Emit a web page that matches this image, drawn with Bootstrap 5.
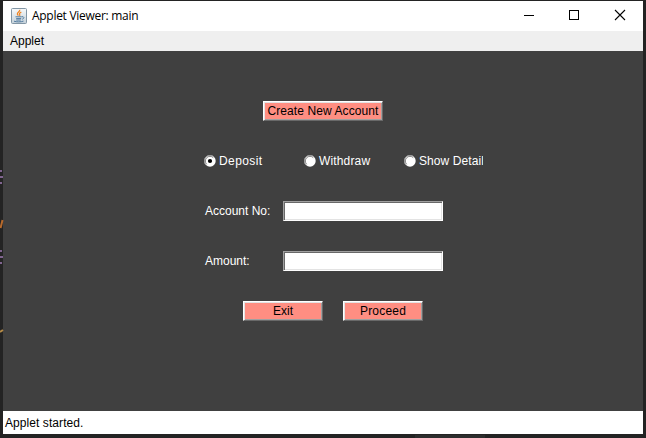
<!DOCTYPE html>
<html lang="en">
<head>
<meta charset="utf-8">
<title>Applet Viewer: main</title>
<link href="https://cdn.jsdelivr.net/npm/bootstrap@5.3.0/dist/css/bootstrap.min.css" rel="stylesheet">
<style>
html, body { height: 438px; overflow: hidden; }
body { background: #232323; font: 12px/20px "Liberation Sans", Arial, sans-serif; color: #000; padding: 1px 3px 4px; }
.desktop-edge { left: 0; top: 0; pointer-events: none; }
.applet-window { width: 640px; height: 433px; }
.title-bar { height: 30px; background: #fff; font: 12px/30px "Open Sans", "Noto Sans", sans-serif; padding-left: 8px; }
.title-text { margin-left: 5px; letter-spacing: -.29px; }
.menu-strip { height: 20px; background: #efefef; padding-left: 7px; }
.applet-body { background: #404040; height: 360px; padding: 50px 0 0 200px; }
.applet-form { width: 280px; gap: 30px; }
.form-line { height: 20px; }
.awt-btn { height: 20px; padding: 0; border: 1px solid; border-color: #fff #696969 #696969 #fff; border-radius: 0; background: #ff8e82; box-shadow: inset 1px 1px #e3e3e3, inset -1px -1px #a0a0a0; font: 12px/18px "Liberation Sans", Arial, sans-serif; color: #000; white-space: nowrap; }
.awt-wide { width: 120px; margin-left: 60px; letter-spacing: .09px; }
.awt-mid { width: 80px; }
.action-line { gap: 20px; padding-left: 40px; }
.awt-field { width: 160px; height: 20px; border: 1px solid; border-color: #a0a0a0 #fff #fff #a0a0a0; border-radius: 0; background: #fff; box-shadow: inset 1px 1px #696969, inset -1px -1px #e3e3e3; padding: 0 4px; outline: 0; font-size: 12px; }
.field-name { width: 80px; padding-left: 2px; color: #fff; }
.radio-option { width: 100px; color: #fff; white-space: nowrap; padding-left: 1px; gap: 3px; }
.radio-option svg { margin-top: -1px; }
.radio-last { width: 80px; overflow: hidden; letter-spacing: .08px; }
.t-deposit { letter-spacing: .42px; }
.t-withdraw { letter-spacing: .15px; }
.t-proceed { letter-spacing: .2px; }
.status-strip { height: 23px; background: #fff; line-height: 24px; padding-left: 2px; letter-spacing: .07px; }
svg { display: block; flex: none; }
</style>
<script src="https://cdn.jsdelivr.net/npm/bootstrap@5.3.0/dist/js/bootstrap.bundle.min.js"></script>
</head>
<body>
<svg class="desktop-edge position-absolute" width="646" height="438" aria-hidden="true">
  <path d="M0 171h2M0 177h3M0 183h2M0 251h2M0 257h3M0 263h2" stroke="#80658f" stroke-width="2"/>
  <path d="M.5 228L2.5 220" stroke="#b86a2c" stroke-width="2"/>
  <path d="M0 332L3 330" stroke="#b58b47" stroke-width="2"/>
  <path d="M415 435h70v3h-70z" fill="#2d2d2d"/>
</svg>
<main class="applet-window d-flex flex-column">
  <header class="title-bar d-flex align-items-center">
    <svg width="16" height="16" viewBox="0 0 16 16">
      <defs><linearGradient id="tile" x2="0" y2="1"><stop stop-color="#f8fafb"/><stop offset="1" stop-color="#c3d0d9"/></linearGradient></defs>
      <rect x=".5" y=".5" width="15" height="15" rx="1" fill="url(#tile)" stroke="#8296a5"/>
      <path d="M8.7 1.8C9.5 3.6 5.6 4.4 6.4 6.2c.2.6.8.9.9 1.5M10.3 4.1C8.5 4.9 8 5.7 8.7 6.5c.4.5.1 1-.3 1.4" fill="none" stroke="#ef8422" stroke-width="1.2"/>
      <path d="M4.5 8.8h6.3M5.2 10.6h5M3 13.2c2.5.9 7 .9 9.5-.1M5.2 12h4.6M11 8.7c2.5-.3 2.3 2 .2 2.5" fill="none" stroke="#527b9f"/>
    </svg>
    <span class="title-text">Applet Viewer: main</span>
    <div class="d-flex ms-auto" role="group" aria-label="Window controls">
      <svg width="45" height="30" shape-rendering="crispEdges"><path d="M17 14h10v1H17z"/></svg>
      <svg width="45" height="30" shape-rendering="crispEdges"><path d="M17.5 9.5h9v9h-9z" fill="none" stroke="#000"/></svg>
      <svg width="46" height="30"><path d="M18 9l10 10M28 9L18 19" stroke="#000" stroke-width="1.1"/></svg>
    </div>
  </header>
  <nav class="menu-strip">Applet</nav>
  <section class="applet-body">
    <form class="applet-form d-flex flex-column">
      <div class="form-line d-flex"><button type="button" class="btn awt-btn awt-wide">Create New Account</button></div>
      <div class="form-line d-flex">
        <div class="radio-option d-flex align-items-center">
          <svg width="12" height="12"><circle cx="6" cy="6" r="5.7" fill="#fff"/><path d="M1.9 10.1A5.5 5.5 0 0 1 10.1 1.9" fill="none" stroke="#999"/><path d="M2.7 9.3A4.6 4.6 0 0 1 9.3 2.7" fill="none" stroke="#666" stroke-width=".8"/><circle cx="6" cy="6" r="2.1"/></svg><span class="t-deposit">Deposit</span>
        </div>
        <div class="radio-option d-flex align-items-center">
          <svg width="12" height="12"><circle cx="6" cy="6" r="5.7" fill="#fff"/><path d="M1.9 10.1A5.5 5.5 0 0 1 10.1 1.9" fill="none" stroke="#999"/><path d="M2.7 9.3A4.6 4.6 0 0 1 9.3 2.7" fill="none" stroke="#666" stroke-width=".8"/></svg><span class="t-withdraw">Withdraw</span>
        </div>
        <div class="radio-option radio-last d-flex align-items-center">
          <svg width="12" height="12"><circle cx="6" cy="6" r="5.7" fill="#fff"/><path d="M1.9 10.1A5.5 5.5 0 0 1 10.1 1.9" fill="none" stroke="#999"/><path d="M2.7 9.3A4.6 4.6 0 0 1 9.3 2.7" fill="none" stroke="#666" stroke-width=".8"/></svg><span>Show Detail</span>
        </div>
      </div>
      <div class="form-line d-flex"><label class="field-name" for="acct">Account No:</label><input id="acct" class="awt-field" type="text"></div>
      <div class="form-line d-flex"><label class="field-name" for="amt">Amount:</label><input id="amt" class="awt-field" type="text"></div>
      <div class="form-line action-line d-flex"><button type="button" class="btn awt-btn awt-mid">Exit</button><button type="button" class="btn awt-btn awt-mid t-proceed">Proceed</button></div>
    </form>
  </section>
  <footer class="status-strip">Applet started.</footer>
</main>
</body>
</html>
